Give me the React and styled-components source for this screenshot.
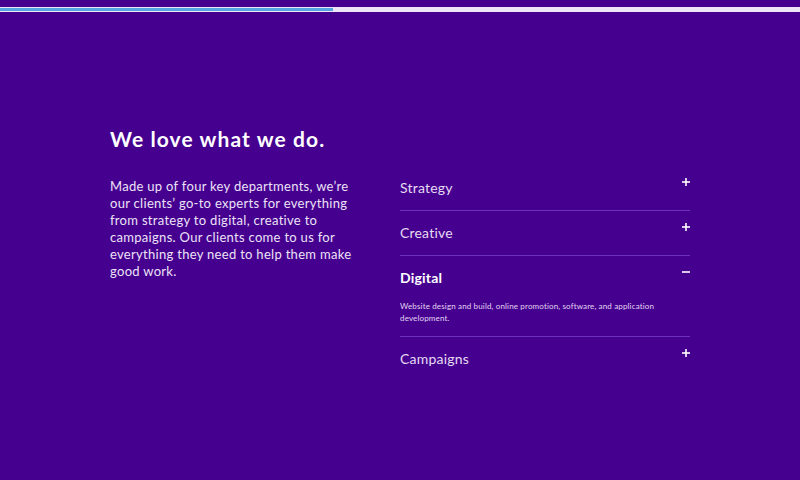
import React, { useState } from "react";
import styled, { createGlobalStyle } from "styled-components";

const Global = createGlobalStyle`
  html, body { margin: 0; padding: 0; }
  body { background: #45008f; font-family: Lato, "Noto Sans", sans-serif; -webkit-font-smoothing: antialiased; }
`;

const Page = styled.div`
  width: 800px;
  height: 480px;
  background: #45008f;
  position: relative;
  overflow: hidden;
`;

const Progress = styled.div`
  position: absolute;
  top: 7px;
  left: 0;
  right: 0;
  height: 5px;
  background: #ede6f6;
`;

const ProgressFill = styled.div`
  height: 3px;
  margin-top: 1px;
  background: #55a6e2;
`;

const Section = styled.section`
  padding: 126px 0 0 110px;
  display: grid;
  grid-template-columns: 250px 290px;
  column-gap: 40px;
`;

const Heading = styled.h2`
  grid-column: 1 / -1;
  margin: 0 0 14px;
  font-size: 21px;
  line-height: 26px;
  font-weight: 700;
  color: #ffffff;
  letter-spacing: 1.1px;
`;

const Intro = styled.p`
  margin: 0;
  padding-top: 12px;
  font-size: 13px;
  line-height: 17px;
  color: #ece3f7;
  letter-spacing: 0.3px;
`;

const List = styled.div`
  display: flex;
  flex-direction: column;
`;

const Item = styled.div`
  padding: 12px 0;
  border-bottom: ${(p) => (p.$last ? "none" : "1px solid rgba(140, 90, 220, 0.55)")};
`;

const Header = styled.div`
  display: flex;
  justify-content: space-between;
  align-items: flex-start;
  cursor: pointer;
`;

const Title = styled.div`
  font-size: 14px;
  line-height: 20px;
  letter-spacing: 0.2px;
  font-weight: ${(p) => (p.$open ? 700 : 400)};
  color: ${(p) => (p.$open ? "#ffffff" : "#e6dcf3")};
`;

const Toggle = styled.svg`
  width: 8px;
  height: 8px;
  margin-top: 0;
  flex: none;
`;

const Desc = styled.p`
  margin: 12px 0 0;
  font-size: 8px;
  line-height: 12px;
  letter-spacing: 0.15px;
  color: #e2d6f2;
  padding-right: 10px;
`;

const items = [
  { title: "Strategy" },
  { title: "Creative" },
  {
    title: "Digital",
    desc: "Website design and build, online promotion, software, and application development.",
  },
  { title: "Campaigns" },
];

export default function App() {
  const [open, setOpen] = useState(2);
  return (
    <Page>
      <Global />
      <Progress>
        <ProgressFill style={{ width: "333px" }} />
      </Progress>
      <Section>
        <Heading>We love what we do.</Heading>
        <Intro>
          Made up of four key departments, we’re our clients’ go-to experts for everything from
          strategy to digital, creative to campaigns. Our clients come to us for everything they
          need to help them make good work.
        </Intro>
        <List>
          {items.map((it, i) => {
            const isOpen = open === i;
            return (
              <Item key={it.title} $last={i === items.length - 1}>
                <Header onClick={() => setOpen(isOpen ? -1 : i)}>
                  <Title $open={isOpen}>{it.title}</Title>
                  <Toggle viewBox="0 0 8 8">
                    <path d="M0 4H8" stroke="#fff" strokeWidth="1.6" />
                    {!isOpen && <path d="M4 0V8" stroke="#fff" strokeWidth="1.6" />}
                  </Toggle>
                </Header>
                {isOpen && it.desc && <Desc>{it.desc}</Desc>}
              </Item>
            );
          })}
        </List>
      </Section>
    </Page>
  );
}
